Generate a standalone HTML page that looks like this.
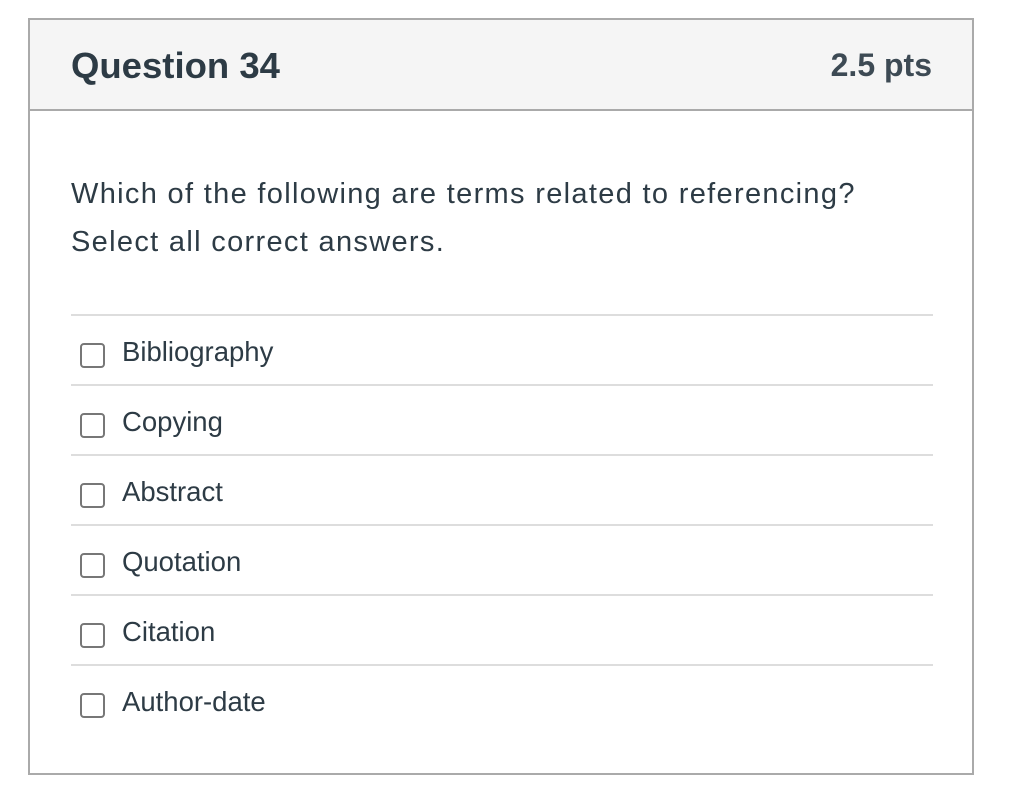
<!DOCTYPE html>
<html><head><style>
body{margin:0;background:#fff;font-family:"Liberation Sans",sans-serif;color:#2d3b45;}
.box{position:absolute;left:28px;top:18px;width:942px;height:753px;border:2px solid #aaa;}
.hd{height:89px;background:#f5f5f5;border-bottom:2px solid #aaa;position:relative;}
.hd .t{position:absolute;left:41px;top:25px;font-size:36.5px;font-weight:bold;}
.hd .p{position:absolute;right:40px;top:27px;font-size:32px;font-weight:bold;color:#3d4a54;}
.q{position:absolute;left:41px;top:150px;font-size:29px;line-height:48px;letter-spacing:1.32px;}
.ln{position:absolute;left:41px;width:862px;height:2px;background:#ddd;}
.a{position:absolute;left:41px;height:70px;width:862px;}
.cb{position:absolute;left:9px;top:29px;width:21px;height:21px;border:2px solid #777;border-radius:4px;}
.lb{position:absolute;left:51px;top:22px;font-size:27.5px;}
</style></head><body>
<div class="box">
<div class="hd"><div class="t">Question 34</div><div class="p">2.5 pts</div></div>
<div class="q">Which of the following are terms related to referencing?<br>Select all correct answers.</div>
<div class="ln" style="top:294px"></div>
<div class="a" style="top:294px"><div class="cb"></div><div class="lb">Bibliography</div></div>
<div class="ln" style="top:364px"></div>
<div class="a" style="top:364px"><div class="cb"></div><div class="lb">Copying</div></div>
<div class="ln" style="top:434px"></div>
<div class="a" style="top:434px"><div class="cb"></div><div class="lb">Abstract</div></div>
<div class="ln" style="top:504px"></div>
<div class="a" style="top:504px"><div class="cb"></div><div class="lb">Quotation</div></div>
<div class="ln" style="top:574px"></div>
<div class="a" style="top:574px"><div class="cb"></div><div class="lb">Citation</div></div>
<div class="ln" style="top:644px"></div>
<div class="a" style="top:644px"><div class="cb"></div><div class="lb">Author-date</div></div>
</div>
</body></html>
